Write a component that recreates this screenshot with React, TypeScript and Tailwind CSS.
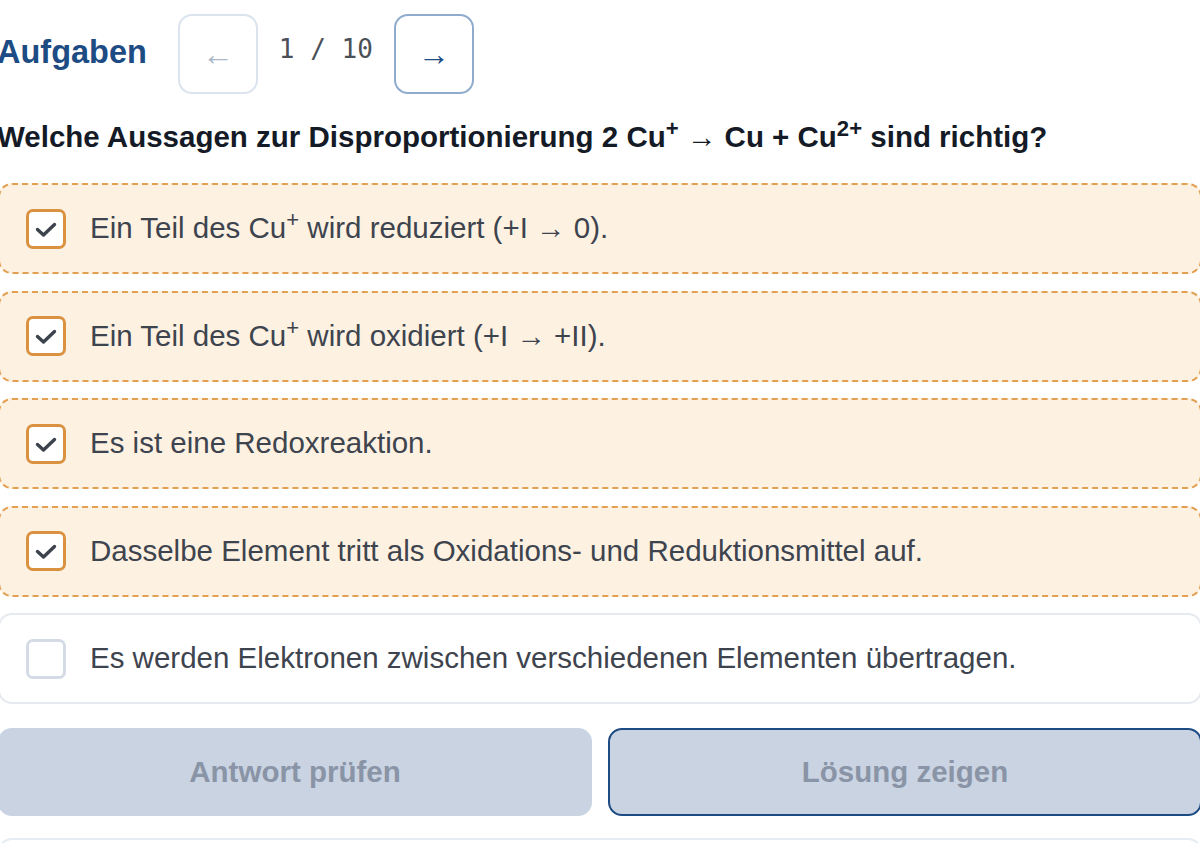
import React from 'react';

type Option = {
  id: number;
  text: React.ReactNode;
  checked: boolean;
};

const Cu = ({ charge }: { charge: string }) => (
  <>
    Cu<sup>{charge}</sup>
  </>
);

const options: Option[] = [
  {
    id: 1,
    text: (
      <>
        Ein Teil des <Cu charge="+" /> wird reduziert (+I → 0).
      </>
    ),
    checked: true,
  },
  {
    id: 2,
    text: (
      <>
        Ein Teil des <Cu charge="+" /> wird oxidiert (+I → +II).
      </>
    ),
    checked: true,
  },
  { id: 3, text: 'Es ist eine Redoxreaktion.', checked: true },
  { id: 4, text: 'Dasselbe Element tritt als Oxidations- und Reduktionsmittel auf.', checked: true },
  { id: 5, text: 'Es werden Elektronen zwischen verschiedenen Elementen übertragen.', checked: false },
];

const CheckBox = ({ checked }: { checked: boolean }) =>
  checked ? (
    <div className="w-[40px] h-[40px] shrink-0 rounded-[7px] border-[3px] border-[#da9240] bg-white flex items-center justify-center">
      <svg width="24" height="18" viewBox="0 0 24 18" fill="none" className="mt-[2px]">
        <path d="M3.5 8.5 L9.5 14 L20.5 3.5" stroke="#3d434d" strokeWidth="3.4" strokeLinecap="round" strokeLinejoin="round" />
      </svg>
    </div>
  ) : (
    <div className="w-[40px] h-[40px] shrink-0 rounded-[7px] border-[3px] border-[#d5dbe4] bg-white" />
  );

export default function App() {
  return (
    <div className="min-h-screen bg-white overflow-hidden font-['Liberation_Sans',Arial,sans-serif]">
      <div className="mx-[-2px] pt-[14px]">
        {/* Header with pager */}
        <div className="flex items-center">
          <h1 className="text-[32.5px] font-bold text-[#1d4b84] ml-[-1px] mt-[-3px] leading-none">Aufgaben</h1>
          <button className="ml-[31px] w-[80px] h-[80px] rounded-[14px] border-2 border-[#dbe3ee] bg-white flex items-center justify-center text-[#aab8c9] text-[32px] leading-none">
            ←
          </button>
          <span className="mx-[21px] font-['DejaVu_Sans_Mono',monospace] text-[26px] text-[#4b5058] mt-[-9px]">
            1 / 10
          </span>
          <button className="w-[80px] h-[80px] rounded-[14px] border-2 border-[#8facce] bg-white flex items-center justify-center text-[#1d4b84] text-[32px] leading-none">
            →
          </button>
        </div>

        {/* Question */}
        <h2 className="mt-[25px] text-[29.5px] leading-[36px] font-bold text-[#141a26] ml-[-1px]">
          Welche Aussagen zur Disproportionierung 2 <Cu charge="+" /> → Cu + <Cu charge="2+" /> sind richtig?
        </h2>

        {/* Options */}
        <div className="mt-[28px] flex flex-col gap-[16.5px]">
          {options.map((o) => (
            <div
              key={o.id}
              className={
                o.checked
                  ? 'h-[91px] rounded-[14px] border-2 border-dashed border-[#e3a052] bg-[#fdf1e2] flex items-center pl-[26px] gap-[24px]'
                  : 'h-[91px] rounded-[14px] border-2 border-[#e6e9ef] bg-white flex items-center pl-[26px] gap-[24px]'
              }
            >
              <CheckBox checked={o.checked} />
              <span className="text-[29.5px] text-[#3e444e]">{o.text}</span>
            </div>
          ))}
        </div>

        {/* Actions */}
        <div className="mt-[24px] grid grid-cols-2 gap-[16px]">
          <button className="h-[88px] rounded-[14px] bg-[#c9d3e2] text-[#8994a6] text-[29.5px] font-bold">
            Antwort prüfen
          </button>
          <button className="h-[88px] rounded-[14px] bg-[#c9d3e2] border-2 border-[#1d4b84] text-[#8994a6] text-[29.5px] font-bold">
            Lösung zeigen
          </button>
        </div>

        {/* Next panel */}
        <div className="mt-[22px] h-[80px] rounded-t-[14px] border-2 border-b-0 border-[#e6ecf4] bg-white" />
      </div>
    </div>
  );
}
